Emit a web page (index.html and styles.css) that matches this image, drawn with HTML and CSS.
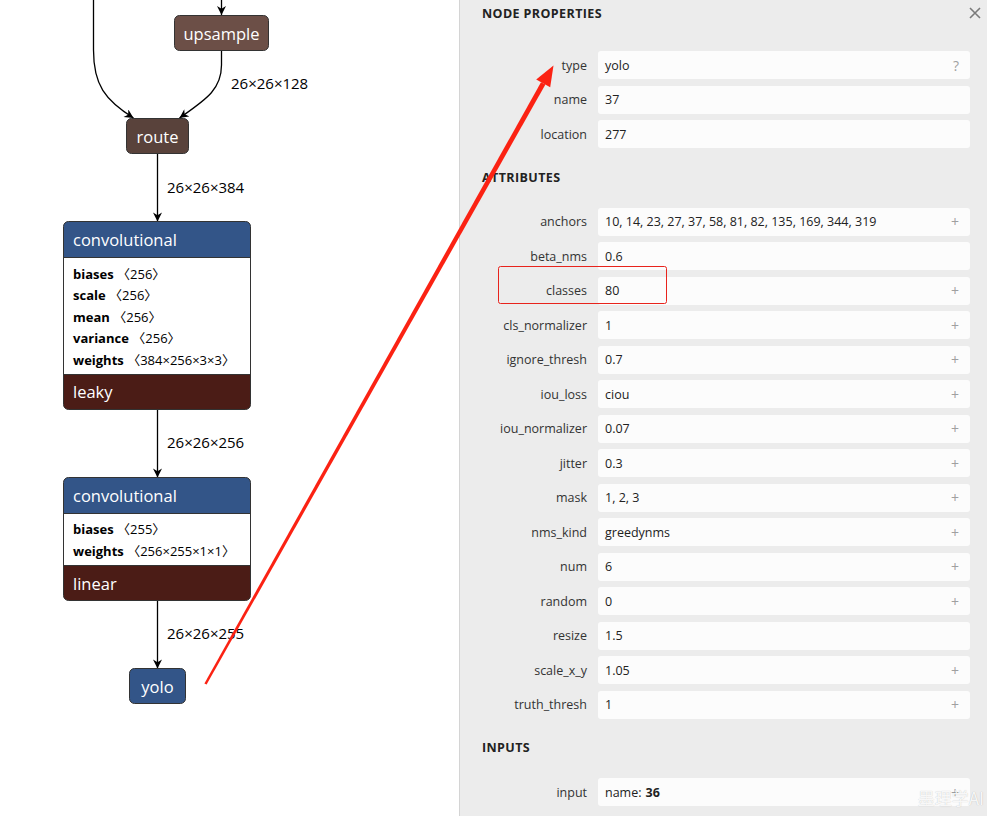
FILE: index.html
```html
<!DOCTYPE html>
<html lang="en">
<head>
    <meta charset="UTF-8">
    <meta name="viewport" content="width=device-width, initial-scale=1.0">
    <title>Netron - yolo</title>
    <link rel="stylesheet" href="styles.css">
</head>
<body>
    <div class="graph">
        <svg class="graph-canvas" width="459" height="816" viewBox="0 0 459 816">
            <defs>
                <marker id="arrowhead" viewBox="0 0 10 10" refX="10" refY="5" markerUnits="userSpaceOnUse" markerWidth="10" markerHeight="9" orient="auto">
                    <path d="M 0 0 L 10 5 L 0 10 L 3 5 z"></path>
                </marker>
            </defs>

            <!-- edges -->
            <path class="edge" d="M93.5,0 V50 C93.5,85 105,100 133.5,118" marker-end="url(#arrowhead)"></path>
            <path class="edge" d="M221.5,0 V15" marker-end="url(#arrowhead)"></path>
            <path class="edge" d="M221.5,51 V65 C221.5,90 205,100 179.5,118" marker-end="url(#arrowhead)"></path>
            <path class="edge" d="M157.5,154 V221.5" marker-end="url(#arrowhead)"></path>
            <path class="edge" d="M157.5,409.5 V477.5" marker-end="url(#arrowhead)"></path>
            <path class="edge" d="M157.5,600.5 V668.5" marker-end="url(#arrowhead)"></path>

            <text class="edge-label" x="231" y="83">26×26×128</text>
            <text class="edge-label" x="167" y="187">26×26×384</text>
            <text class="edge-label" x="167" y="442">26×26×256</text>
            <text class="edge-label" x="167" y="633">26×26×255</text>

            <!-- upsample -->
            <rect class="node node-shape" x="174.5" y="15.5" width="94" height="35" rx="5"></rect>
            <text class="node-title node-title-center" x="221.5" y="33.5">upsample</text>

            <!-- route -->
            <rect class="node node-tensor" x="126.5" y="118.5" width="62" height="35" rx="5"></rect>
            <text class="node-title node-title-center" x="157.5" y="136.5">route</text>

            <!-- convolutional / leaky -->
            <path class="node-layer" d="M63.5,257 V226.5 a5,5 0 0 1 5,-5 H245.5 a5,5 0 0 1 5,5 V257 Z"></path>
            <rect class="node-body" x="63.5" y="257" width="187" height="117"></rect>
            <path class="node-activation" d="M63.5,374 H250.5 V404.5 a5,5 0 0 1 -5,5 H68.5 a5,5 0 0 1 -5,-5 Z"></path>
            <line class="node-divider" x1="63.5" y1="257.5" x2="250.5" y2="257.5"></line>
            <line class="node-divider" x1="63.5" y1="374.5" x2="250.5" y2="374.5"></line>
            <rect class="node-border" x="63.5" y="221.5" width="187" height="188" rx="5"></rect>
            <text class="node-title" x="73" y="239.5">convolutional</text>
            <text class="node-attr" x="73" y="273.5"><tspan class="attr-name">biases</tspan> 〈256〉</text>
            <text class="node-attr" x="73" y="295"><tspan class="attr-name">scale</tspan> 〈256〉</text>
            <text class="node-attr" x="73" y="316.5"><tspan class="attr-name">mean</tspan> 〈256〉</text>
            <text class="node-attr" x="73" y="338"><tspan class="attr-name">variance</tspan> 〈256〉</text>
            <text class="node-attr" x="73" y="359.5"><tspan class="attr-name">weights</tspan> 〈384×256×3×3〉</text>
            <text class="node-title" x="73" y="391.5">leaky</text>

            <!-- convolutional / linear -->
            <path class="node-layer" d="M63.5,513 V482.5 a5,5 0 0 1 5,-5 H245.5 a5,5 0 0 1 5,5 V513 Z"></path>
            <rect class="node-body" x="63.5" y="513" width="187" height="52.5"></rect>
            <path class="node-activation" d="M63.5,565.5 H250.5 V595.5 a5,5 0 0 1 -5,5 H68.5 a5,5 0 0 1 -5,-5 Z"></path>
            <line class="node-divider" x1="63.5" y1="513.5" x2="250.5" y2="513.5"></line>
            <line class="node-divider" x1="63.5" y1="565.5" x2="250.5" y2="565.5"></line>
            <rect class="node-border" x="63.5" y="477.5" width="187" height="123" rx="5"></rect>
            <text class="node-title" x="73" y="495.5">convolutional</text>
            <text class="node-attr" x="73" y="529"><tspan class="attr-name">biases</tspan> 〈255〉</text>
            <text class="node-attr" x="73" y="550.5"><tspan class="attr-name">weights</tspan> 〈256×255×1×1〉</text>
            <text class="node-title" x="73" y="583.5">linear</text>

            <!-- yolo -->
            <rect class="node node-layer-fill" x="129.5" y="668.5" width="56" height="35" rx="5"></rect>
            <text class="node-title node-title-center" x="157.5" y="686.5">yolo</text>
        </svg>
    </div>

    <aside class="sidebar">
        <div class="sidebar-header">
            <span class="sidebar-title">NODE PROPERTIES</span>
            <svg class="sidebar-close" width="12" height="12" viewBox="0 0 12 12">
                <path d="M1 1 L11 11 M11 1 L1 11"></path>
            </svg>
        </div>

        <div class="props props-first">
            <div class="prop"><span class="prop-name">type</span><div class="prop-value">yolo<span class="prop-btn">?</span></div></div>
            <div class="prop"><span class="prop-name">name</span><div class="prop-value">37</div></div>
            <div class="prop"><span class="prop-name">location</span><div class="prop-value">277</div></div>
        </div>

        <div class="section-title">ATTRIBUTES</div>
        <div class="props">
            <div class="prop"><span class="prop-name">anchors</span><div class="prop-value">10, 14, 23, 27, 37, 58, 81, 82, 135, 169, 344, 319<span class="prop-btn">+</span></div></div>
            <div class="prop"><span class="prop-name">beta_nms</span><div class="prop-value">0.6</div></div>
            <div class="prop"><span class="prop-name">classes</span><div class="prop-value">80<span class="prop-btn">+</span></div></div>
            <div class="prop"><span class="prop-name">cls_normalizer</span><div class="prop-value">1<span class="prop-btn">+</span></div></div>
            <div class="prop"><span class="prop-name">ignore_thresh</span><div class="prop-value">0.7<span class="prop-btn">+</span></div></div>
            <div class="prop"><span class="prop-name">iou_loss</span><div class="prop-value">ciou<span class="prop-btn">+</span></div></div>
            <div class="prop"><span class="prop-name">iou_normalizer</span><div class="prop-value">0.07<span class="prop-btn">+</span></div></div>
            <div class="prop"><span class="prop-name">jitter</span><div class="prop-value">0.3<span class="prop-btn">+</span></div></div>
            <div class="prop"><span class="prop-name">mask</span><div class="prop-value">1, 2, 3<span class="prop-btn">+</span></div></div>
            <div class="prop"><span class="prop-name">nms_kind</span><div class="prop-value">greedynms<span class="prop-btn">+</span></div></div>
            <div class="prop"><span class="prop-name">num</span><div class="prop-value">6<span class="prop-btn">+</span></div></div>
            <div class="prop"><span class="prop-name">random</span><div class="prop-value">0<span class="prop-btn">+</span></div></div>
            <div class="prop"><span class="prop-name">resize</span><div class="prop-value">1.5</div></div>
            <div class="prop"><span class="prop-name">scale_x_y</span><div class="prop-value">1.05<span class="prop-btn">+</span></div></div>
            <div class="prop"><span class="prop-name">truth_thresh</span><div class="prop-value">1<span class="prop-btn">+</span></div></div>
        </div>

        <div class="section-title">INPUTS</div>
        <div class="props">
            <div class="prop"><span class="prop-name">input</span><div class="prop-value">name: <b>36</b><span class="prop-btn">+</span></div></div>
        </div>
    </aside>

    <!-- screenshot markup drawn on top -->
    <svg class="annotations" width="987" height="816" viewBox="0 0 987 816">
        <polygon class="mark" points="204.4,683.4 206.6,684.6 545.4,84.6 541,82.2"></polygon>
        <polygon class="mark" points="553.5,65.5 550.2,87.3 536.2,79.5"></polygon>
        <rect class="mark-box" x="498.5" y="266.5" width="168" height="37" rx="2"></rect>
    </svg>
    <div class="watermark">墨理学AI</div>
</body>
</html>
```

FILE: styles.css
```css
body {
    margin: 0;
    width: 987px;
    height: 816px;
    display: flex;
    position: relative;
    overflow: hidden;
    font-family: "Open Sans", "Noto Sans", sans-serif;
    background-color: #fff;
}

/* graph */
.graph {
    width: 459px;
    height: 816px;
    flex: none;
    background-color: #fff;
}

.graph-canvas {
    display: block;
}

.edge {
    fill: none;
    stroke: #000;
    stroke-width: 1.3px;
}

#arrowhead path {
    fill: #000;
}

.edge-label {
    font-size: 15px;
    fill: #000;
    dominant-baseline: central;
}

.node {
    stroke: #333;
    stroke-width: 1px;
}

.node-shape {
    fill: #6c4f47;
}

.node-tensor {
    fill: #59423b;
}

.node-layer,
.node-layer-fill {
    fill: #335588;
}

.node-activation {
    fill: #4b1c16;
}

.node-body {
    fill: #fff;
}

.node-divider {
    stroke: #333;
    stroke-width: 1px;
}

.node-border {
    fill: none;
    stroke: #333;
    stroke-width: 1px;
}

.node-title {
    font-size: 16.5px;
    fill: #fff;
    dominant-baseline: central;
}

.node-title-center {
    text-anchor: middle;
}

.node-attr {
    font-family: "Open Sans", "Noto Sans CJK SC", sans-serif;
    font-size: 13px;
    fill: #000;
    dominant-baseline: central;
}

.attr-name {
    font-weight: bold;
}

/* sidebar */
.sidebar {
    flex: 1;
    height: 816px;
    box-sizing: border-box;
    background-color: #ececec;
    border-left: 1px solid #d4d4d4;
    padding: 0 17px 0 22px;
    color: #333;
    font-size: 12.5px;
}

.sidebar-header {
    height: 26px;
    display: flex;
    align-items: center;
    justify-content: space-between;
}

.sidebar-title,
.section-title {
    font-weight: bold;
    font-size: 12.5px;
    letter-spacing: 0.4px;
    color: #222;
}

.sidebar-close {
    margin-right: -11px;
    margin-top: -1px;
}

.sidebar-close path {
    stroke: #7a7a7a;
    stroke-width: 1.6px;
}

.section-title {
    height: 20px;
    line-height: 20px;
    margin-top: 19.5px;
}

.props {
    display: flex;
    flex-direction: column;
    gap: 6.5px;
    margin-top: 20px;
}

.props-first {
    margin-top: 25px;
}

.prop {
    display: flex;
    align-items: center;
    gap: 11px;
}

.prop-name {
    width: 105px;
    flex: none;
    text-align: right;
    color: #333;
}

.prop-value {
    flex: 1;
    height: 28px;
    display: flex;
    align-items: center;
    padding: 0 7px;
    background-color: #fcfcfc;
    border-radius: 3px;
    color: #222;
    position: relative;
}

.prop-value b {
    margin-left: 4px;
}

.prop-btn {
    margin-left: auto;
    margin-right: 4px;
    color: #a0a0a0;
    font-size: 14px;
}

/* overlay marks */
.annotations {
    position: absolute;
    left: 0;
    top: 0;
    pointer-events: none;
}

.mark {
    fill: #fb2213;
}

.mark-box {
    fill: none;
    stroke: #e8231c;
    stroke-width: 1px;
}

.watermark {
    position: absolute;
    right: 3px;
    bottom: 6px;
    font-family: "Noto Sans CJK SC", sans-serif;
    font-size: 17px;
    color: rgba(255, 255, 255, 0.9);
    text-shadow: 0 0 1px rgba(0, 0, 0, 0.25);
    pointer-events: none;
}
```
